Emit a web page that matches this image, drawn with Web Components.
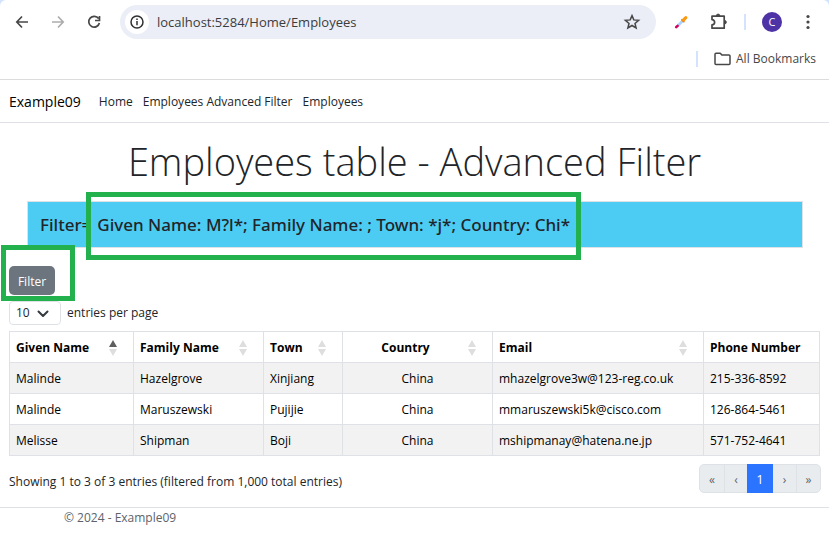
<!DOCTYPE html>
<html lang="en">
<head>
<meta charset="utf-8">
<title>Employees table - Advanced Filter</title>
<style>
  body { margin: 0; background: #fff; color: #212529; font: 12px/18px "Open Sans", "Noto Sans", sans-serif; }
</style>
</head>
<body>
<browser-bar></browser-bar>
<site-nav></site-nav>
<employees-page></employees-page>
<site-footer>© 2024 - Example09</site-footer>
<script>
const base = `<style>
  *, *::before, *::after { box-sizing: border-box; }
  :host { display: block; }
  button, input, select { font: inherit; color: inherit; margin: 0; padding: 0; border: 0; background: none; }
  a { color: inherit; text-decoration: none; }
  svg { display: block; }
</style>`;

function define(name, html, setup) {
  const template = document.createElement('template');
  template.innerHTML = base + html;
  customElements.define(name, class extends HTMLElement {
    constructor() {
      super();
      this.attachShadow({ mode: 'open' }).append(template.content.cloneNode(true));
    }
    connectedCallback() { if (setup) setup(this, this.shadowRoot); }
  });
}

/* Browser toolbar and bookmarks row */
define('browser-bar', `<style>
  :host { border-bottom: 1px solid #dcdcdc; color: #474747; background: linear-gradient(#d3e3fd, #d3e3fd) 0 0 / 100% 8px no-repeat; }
  .sheet { background: #fff; border-radius: 6px 6px 0 0; }
  .tools { display: flex; align-items: center; padding: 5px 11px 5px 12px; }
  .nav { display: flex; gap: 16px; margin-right: 16px; }
  .nav button { width: 20px; height: 20px; display: grid; place-items: center; }
  .omni { flex: 1; display: flex; align-items: center; height: 34px; border-radius: 17px; background: #ebeef7; padding: 0 15px 0 5px; }
  .info { width: 24px; height: 24px; border-radius: 12px; background: #fff; display: grid; place-items: center; }
  input { flex: 1; min-width: 0; padding-left: 8px; font-size: 13px; line-height: 20px; color: #3c3c3c; outline: 0; }
  .right { display: flex; align-items: center; margin-left: 15px; }
  .puzzle { margin: 0 16px 0 17px; }
  .sep { width: 2px; height: 16px; background: #d3e3fd; }
  .avatar { width: 20px; height: 20px; border-radius: 10px; background: #4d33a6; color: #fff; font-size: 11px; line-height: 20px; text-align: center; margin: 0 16px; }
  .marks { display: flex; align-items: center; justify-content: flex-end; height: 35px; padding: 0 13px 6px 0; }
  .marks .sep { margin-right: 16px; }
  .marks a { display: flex; align-items: center; gap: 5px; }
</style>
<div class="sheet">
  <div class="tools">
    <div class="nav">
      <button aria-label="Back"><svg width="14" height="14" fill="none" stroke="#474747" stroke-width="1.7"><path d="M13 7H2M7 1.5 1.8 7 7 12.5"/></svg></button>
      <button aria-label="Forward"><svg width="14" height="14" fill="none" stroke="#adadad" stroke-width="1.7"><path d="M1 7h11M7 1.5 12.2 7 7 12.5"/></svg></button>
      <button aria-label="Reload"><svg width="14" height="14" fill="none" stroke="#474747" stroke-width="1.7"><path d="M11.6 3.6A5.4 5.4 0 1 0 12.4 8M12.5 1v4.5H8"/></svg></button>
    </div>
    <div class="omni">
      <button class="info" aria-label="Site information"><svg width="14" height="14" fill="none" stroke="#303030" stroke-width="1.5"><circle cx="7" cy="7" r="6"/><path d="M7 6v4.2M7 3.4v1.5"/></svg></button>
      <input type="text" aria-label="Address" value="localhost:5284/Home/Employees">
      <button aria-label="Bookmark this page"><svg width="18" height="18" viewBox="0 0 18 18" fill="none" stroke="#474747" stroke-width="1.5"><path d="M9 2.6 10.8 6.9 15.6 7.3 12 10.4 13.1 15 9 12.5 4.9 15 6 10.4 2.4 7.3 7.2 6.9z"/></svg></button>
    </div>
    <div class="right">
      <button aria-label="Colour picker"><svg width="20" height="20" viewBox="0 0 20 20" fill="none" stroke-linecap="round"><path d="M11.5 9 7 13.5" stroke="#a9d2ff" stroke-width="2.6"/><path d="M6.6 13.8 5.2 15.2" stroke="#d8005e" stroke-width="2.6"/><path d="m11 7.8 1.8 1.8" stroke="#e8710a" stroke-width="1.8"/><path d="m12.6 7.8 2.2-2.2" stroke="#fb9a0e" stroke-width="3.2"/></svg></button>
      <button class="puzzle" aria-label="Extensions"><svg width="20" height="20" viewBox="0 0 20 20" fill="none" stroke="#474747" stroke-width="1.7" stroke-linejoin="round"><path d="M4 4.2h12.2v12H4v-3.4a2.6 2.6 0 0 0 0-5.2z"/><path d="M8.4 3.8a1.7 1.7 0 0 1 3.4 0zM16.6 8.5a1.7 1.7 0 0 1 0 3.4z" fill="#474747" stroke-width="1"/></svg></button>
      <div class="sep"></div>
      <button class="avatar" aria-label="Profile">C</button>
      <button aria-label="Menu"><svg width="20" height="16" fill="#474747"><circle cx="10" cy="2.5" r="1.6"/><circle cx="10" cy="8" r="1.6"/><circle cx="10" cy="13.5" r="1.6"/></svg></button>
    </div>
  </div>
  <div class="marks">
    <div class="sep"></div>
    <a href="#bookmarks"><svg width="17" height="14" fill="none" stroke="#474747" stroke-width="1.5" stroke-linejoin="round"><path d="M1 2.2Q1 1.2 2 1.2h4.2l1.9 1.9H15q1 0 1 1v7.4q0 1-1 1H2q-1 0-1-1z"/></svg>All Bookmarks</a>
  </div>
</div>`);

define('site-nav', `<style>
  :host { border-bottom: 1px solid #dee2e6; }
  nav { display: flex; align-items: center; gap: 10px; padding: 0 9px; height: 42px; padding-top: 2px; }
  .brand { font-size: 14px; margin-right: 8px; color: #000; }
</style>
<nav><a class="brand" href="#top">Example09</a><a href="#home">Home</a><a href="#advanced">Employees Advanced Filter</a><a href="#employees">Employees</a></nav>`);

/* Green outline laid over its slotted content */
define('mark-frame', `<style>
  :host { display: inline-block; position: relative; }
  :host::after { content: ""; position: absolute; inset: var(--frame-inset, -8px); border: 5px solid #22b14c; z-index: 1; pointer-events: none; }
</style><slot></slot>`);

define('filter-banner', `<style>
  :host { margin: 0 26px 0 27px; border: 1px solid #dee2e6; background: #4dccf3; font-family: "Noto Sans", "Open Sans", sans-serif; font-size: 17px; line-height: 24px; font-weight: 500; padding: 11px 12px 10px; }
  div { display: flex; gap: 6px; white-space: nowrap; }
  mark-frame { --frame-inset: -21px -11px -23px -11px; }
</style><div><span>Filter=</span><mark-frame><slot></slot></mark-frame></div>`);

/* Column heading arrows */
define('sort-arrows', `<style>
  :host { width: 8px; margin-right: 10px; }
  svg { fill: #dedede; }
  :host([dir-asc]) .up { fill: #5f5f5f; }
</style><svg width="8" height="16"><path class="up" d="M4 0 8 7H0z"/><path d="M4 16 0 9h8z"/></svg>`);

define('employee-table', `<style>
  table { width: 100%; table-layout: fixed; border-collapse: collapse; color: #000; }
  th, td { border: 1px solid #dee2e6; padding: 7px 6px 5px; height: 31px; text-align: left; white-space: nowrap; }
  th { font-weight: 700; }
  th button { display: flex; align-items: center; gap: 6px; width: 100%; height: 18px; font-weight: 700; text-align: left; }
  th span { flex: 1; }
  .mid, .mid span { text-align: center; }
  tbody tr:nth-child(odd) { background: #f2f2f2; }
</style>
<table>
  <colgroup><col style="width:124px"><col style="width:130px"><col style="width:79px"><col style="width:150px"><col style="width:211px"><col style="width:116px"></colgroup>
  <thead><tr>
    <th aria-sort="ascending"><button><span>Given Name</span><sort-arrows dir-asc></sort-arrows></button></th>
    <th><button><span>Family Name</span><sort-arrows></sort-arrows></button></th>
    <th><button><span>Town</span><sort-arrows></sort-arrows></button></th>
    <th class="mid"><button><span>Country</span><sort-arrows></sort-arrows></button></th>
    <th><button><span>Email</span><sort-arrows></sort-arrows></button></th>
    <th>Phone Number</th>
  </tr></thead><tbody></tbody>
</table>`, (host, root) => {
  const rows = [
    ['Malinde', 'Hazelgrove', 'Xinjiang', 'China', 'mhazelgrove3w@123-reg.co.uk', '215-336-8592'],
    ['Malinde', 'Maruszewski', 'Pujijie', 'China', 'mmaruszewski5k@cisco.com', '126-864-5461'],
    ['Melisse', 'Shipman', 'Boji', 'China', 'mshipmanay@hatena.ne.jp', '571-752-4641'],
  ];
  root.querySelector('tbody').innerHTML = rows.map(r =>
    '<tr>' + r.map((c, i) => `<td${i === 3 ? ' class="mid"' : ''}>${c}</td>`).join('') + '</tr>').join('');
});

define('page-buttons', `<style>
  nav { display: flex; border: 1px solid #dee2e6; border-radius: 5px; background: #e9ecef; height: 29px; }
  button { min-width: 23px; padding: 2px 8px 0; color: #5d646b; border-left: 1px solid #dee2e6; }
  button:first-child { border-left: 0; min-width: 24px; }
  button:last-child { min-width: 24px; }
  .on { background: #2a74ff; color: #fff; margin: -1px 0; padding-top: 0; font-size: 13px; border: 0; min-width: 26px; }
  .on + button { border: 0; }
</style>
<nav aria-label="Pages"><button aria-label="First">«</button><button aria-label="Previous">‹</button><button class="on" aria-current="page">1</button><button aria-label="Next">›</button><button aria-label="Last">»</button></nav>`);

define('employees-page', `<style>
  h1 { margin: 0; padding-top: 14px; font-size: 38px; line-height: 48px; font-weight: 300; text-align: center; }
  filter-banner { margin-top: 16px; }
  main { padding: 0 9px; }
  .action { margin-top: 18px; display: flex; }
  .action mark-frame { --frame-inset: -21px -20px -6px -8px; }
  .filter { display: block; height: 29px; width: 46px; border-radius: 5px; background: #6c757d; color: #fff; padding-top: 2px; }
  .length { display: flex; align-items: center; gap: 6px; margin-top: 6px; }
  .pick { position: relative; }
  .pick svg { position: absolute; right: 12px; top: 9px; pointer-events: none; }
  select { display: block; appearance: none; width: 52px; height: 24px; border: 1px solid #dee2e6; border-radius: 4px; padding: 0 6px; background: #fff; }
  employee-table { margin-top: 6px; }
  .foot { display: flex; justify-content: space-between; align-items: center; margin-top: 8px; }
  .foot span { padding-top: 6px; }
  page-buttons { margin-right: -1px; }
</style>
<h1>Employees table - Advanced Filter</h1>
<filter-banner>Given Name: M?l*; Family Name: ; Town: *j*; Country: Chi*</filter-banner>
<main>
  <div class="action"><mark-frame><button class="filter">Filter</button></mark-frame></div>
  <div class="length">
    <div class="pick"><select id="len"><option>10</option><option>25</option><option>50</option></select>
      <svg width="12" height="8" fill="none" stroke="#343a40" stroke-width="2" stroke-linecap="round" stroke-linejoin="round"><path d="m1.5 1.5 4.5 4.5 4.5-4.5"/></svg></div>
    <label for="len">entries per page</label>
  </div>
  <employee-table></employee-table>
  <div class="foot"><span>Showing 1 to 3 of 3 entries (filtered from 1,000 total entries)</span><page-buttons></page-buttons></div>
</main>`);

define('site-footer', `<style>
  :host { margin-top: 14px; border-top: 1px solid #dee2e6; color: #5c636a; }
  footer { padding: 1px 64px; }
</style><footer><slot></slot></footer>`);
</script>
</body>
</html>
